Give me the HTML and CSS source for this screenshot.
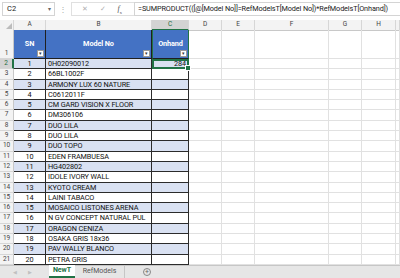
FILE: index.html
```html
<!DOCTYPE html>
<html lang="en">
<head>
    <meta charset="UTF-8">
    <title>NewT - Excel</title>
    <link rel="stylesheet" href="styles.css">
</head>
<body>
    <div class="formula-bar">
        <div class="name-box">C2<span class="drop">&#9662;</span></div>
        <div class="dots">&#8942;</div>
        <div class="fx-icons">
            <span>&#10005;</span>
            <span>&#10003;</span>
            <span class="fx"><i>f</i><sub>x</sub></span>
        </div>
        <div class="formula">=SUMPRODUCT(([@[Model No]]=RefModelsT[Model No])*RefModelsT[Onhand])</div>
    </div>

    <div class="sheet">
        <div class="row col-heads">
            <div class="corner"><span class="tri"></span></div>
            <div class="ch">A</div>
            <div class="ch">B</div>
            <div class="ch sel">C</div>
            <div class="ch">D</div>
            <div class="ch">E</div>
            <div class="ch">F</div>
            <div class="ch">G</div>
            <div class="ch">H</div>
            <div class="ch"></div>
        </div>

        <div class="row head-row">
            <div class="rh">1</div>
            <div class="th">SN<span class="filter">&#9662;</span></div>
            <div class="th">Model No<span class="filter">&#9662;</span></div>
            <div class="th th-sel">Onhand<span class="filter">&#9662;</span></div>
            <div class="c"></div><div class="c"></div><div class="c"></div><div class="c"></div><div class="c"></div><div class="c"></div>
        </div>

        <div id="rows"></div>
    </div>

    <div class="tabs">
        <span class="nav">&#9664;</span>
        <span class="nav">&#9654;</span>
        <div class="tab active">NewT</div>
        <div class="tab">RefModels</div>
        <div class="add">+</div>
    </div>

    <script>
        var models = [
            "0H02090012", "66BL1002F", "ARMONY LUX 60 NATURE", "C0612011F",
            "CM GARD VISION X FLOOR", "DM306106", "DUO LILA", "DUO LILA",
            "DUO TOPO", "EDEN FRAMBUESA", "HG402802", "IDOLE IVORY WALL",
            "KYOTO CREAM", "LAINI TABACO", "MOSAICO LISTONES ARENA",
            "N GV CONCEPT NATURAL PUL", "ORAGON CENIZA", "OSAKA GRIS 18x36",
            "PAV WALLY BLANCO", "PETRA GRIS"
        ];

        var html = "";
        for (var i = 0; i < models.length; i++) {
            var band = i % 2 === 0 ? " band" : "";
            var rowSel = i === 0 ? " sel" : "";
            html += '<div class="row">' +
                '<div class="rh' + rowSel + '">' + (i + 2) + '</div>' +
                '<div class="td sn' + band + '">' + (i + 1) + '</div>' +
                '<div class="td model' + band + '">' + models[i] + '</div>' +
                '<div class="td onhand' + band + (i === 0 ? ' active' : '') + '">' + (i === 0 ? '284<span class="handle"></span>' : '') + '</div>' +
                '<div class="c"></div><div class="c"></div><div class="c"></div><div class="c"></div><div class="c"></div><div class="c"></div>' +
                '</div>';
        }
        document.getElementById("rows").innerHTML = html;
    </script>
</body>
</html>
```

FILE: styles.css
```css
body {
    margin: 0;
    width: 400px;
    height: 278px;
    overflow: hidden;
    font-family: Roboto, "Liberation Sans", sans-serif;
    background: #fff;
    color: #000;
}

/* formula bar */
.formula-bar {
    height: 20px;
    display: flex;
    align-items: center;
    background: #fff;
    box-sizing: border-box;
    padding-bottom: 2px;
}
.name-box {
    width: 53px;
    height: 14px;
    margin-left: 2px;
    border: 1px solid #d4d4d4;
    box-sizing: border-box;
    font-size: 7.5px;
    line-height: 12px;
    padding-left: 4px;
    display: flex;
    justify-content: space-between;
    color: #222;
}
.name-box .drop {
    font-size: 6px;
    color: #666;
    padding-right: 3px;
}
.dots {
    width: 16px;
    text-align: center;
    color: #aaa;
    font-size: 8px;
}
.fx-icons {
    width: 63px;
    height: 14px;
    border: 1px solid #e0e0e0;
    border-right: none;
    box-sizing: border-box;
    display: flex;
    align-items: center;
    justify-content: space-around;
    color: #b0b0b0;
    font-size: 7px;
    padding: 0 6px 0 4px;
}
.fx-icons .fx {
    color: #555;
    font-family: "Liberation Serif", serif;
    font-size: 8px;
}
.fx-icons .fx sub {
    font-size: 5px;
}
.formula {
    flex: 1;
    height: 14px;
    border: 1px solid #d4d4d4;
    border-right: none;
    box-sizing: border-box;
    font-size: 7.3px;
    letter-spacing: -0.12px;
    line-height: 12px;
    padding-left: 3px;
    white-space: nowrap;
    overflow: hidden;
    color: #222;
}

/* grid */
.row {
    display: grid;
    grid-template-columns: 14px 32px 106px 37px 33px 33px 74px 33px 34px 1fr;
    height: 10.3px;
}
.row > div {
    box-sizing: border-box;
    border-right: 1px solid #e1e1e1;
    border-bottom: 1px solid #e1e1e1;
    position: relative;
    font-size: 7.3px;
    letter-spacing: -0.1px;
    line-height: 9.3px;
    white-space: nowrap;
    overflow: visible;
}
.col-heads {
    height: 10px;
}
.col-heads > div {
    background: #f3f3f3;
    border-right-color: #d6d6d6;
    border-bottom-color: #c8c8c8;
    text-align: center;
    color: #444;
    font-size: 6.5px;
}
.col-heads .ch.sel {
    background: #d3d3d3;
    color: #1d6b3f;
    border-bottom: 2px solid #217346;
}
.corner .tri {
    position: absolute;
    right: 1px;
    bottom: 1px;
    width: 0;
    height: 0;
    border-left: 6px solid transparent;
    border-bottom: 6px solid #bcbcbc;
}
.rh {
    background: #f3f3f3;
    color: #444;
    text-align: center;
    font-size: 6.5px !important;
    border-right-color: #c8c8c8 !important;
    border-bottom-color: #d6d6d6 !important;
}
.rh.sel {
    background: #d3d3d3;
    color: #1d6b3f;
    border-right: 2px solid #217346 !important;
}

/* table header */
.head-row {
    height: 29px;
}
.head-row .rh {
    display: flex;
    align-items: flex-end;
    justify-content: center;
}
.th {
    background: #4472c4;
    color: #fff;
    font-weight: bold;
    display: flex;
    align-items: center;
    justify-content: center;
    border-right: 1px solid #1f1f1f !important;
    border-bottom: 1px solid #1f1f1f !important;
}
.th-sel {
    border-left: 1px solid #217346;
    border-right: 1px solid #217346 !important;
}
.filter {
    position: absolute;
    right: 1px;
    bottom: 1px;
    width: 7px;
    height: 7px;
    background: #fff;
    border: 1px solid #9a9a9a;
    box-sizing: border-box;
    color: #333;
    font-size: 5px;
    line-height: 5px;
    text-align: center;
    font-weight: normal;
}

/* table body */
.td {
    border-right: 1px solid #2b2b2b !important;
    border-bottom: 1px solid #2b2b2b !important;
    color: #111;
}
.td.band {
    background: #d9e1f2;
}
.sn {
    text-align: center;
}
.model {
    padding-left: 2px;
}
.onhand {
    text-align: right;
    padding-right: 2px;
}
.onhand.active {
    outline: 2px solid #217346;
    outline-offset: -2px;
    z-index: 2;
}
.handle {
    position: absolute;
    right: -3px;
    bottom: -3px;
    width: 4px;
    height: 4px;
    background: #217346;
    border: 1px solid #fff;
}

/* sheet tabs */
.tabs {
    height: 13px;
    background: #e6e6e6;
    border-top: 1px solid #c6c6c6;
    box-sizing: border-box;
    display: flex;
    align-items: stretch;
    font-size: 7px;
}
.nav {
    color: #c0c0c0;
    font-size: 5px;
    line-height: 12px;
    margin-left: 13px;
}
.nav + .nav {
    margin-left: 11px;
    margin-right: 17px;
}
.tab {
    width: 50px;
    box-sizing: border-box;
    text-align: center;
    line-height: 11px;
    color: #555;
    border-right: 1px solid #c6c6c6;
}
.tab.active {
    width: 26px;
    background: #fff;
    color: #217346;
    font-weight: bold;
    border-right: none;
    border-bottom: 2px solid #217346;
    margin-top: -1px;
}
.add {
    margin-left: 18px;
    margin-top: 2px;
    width: 8px;
    height: 8px;
    border: 1px solid #888;
    border-radius: 50%;
    box-sizing: border-box;
    color: #666;
    font-size: 7px;
    line-height: 6px;
    text-align: center;
}
```
